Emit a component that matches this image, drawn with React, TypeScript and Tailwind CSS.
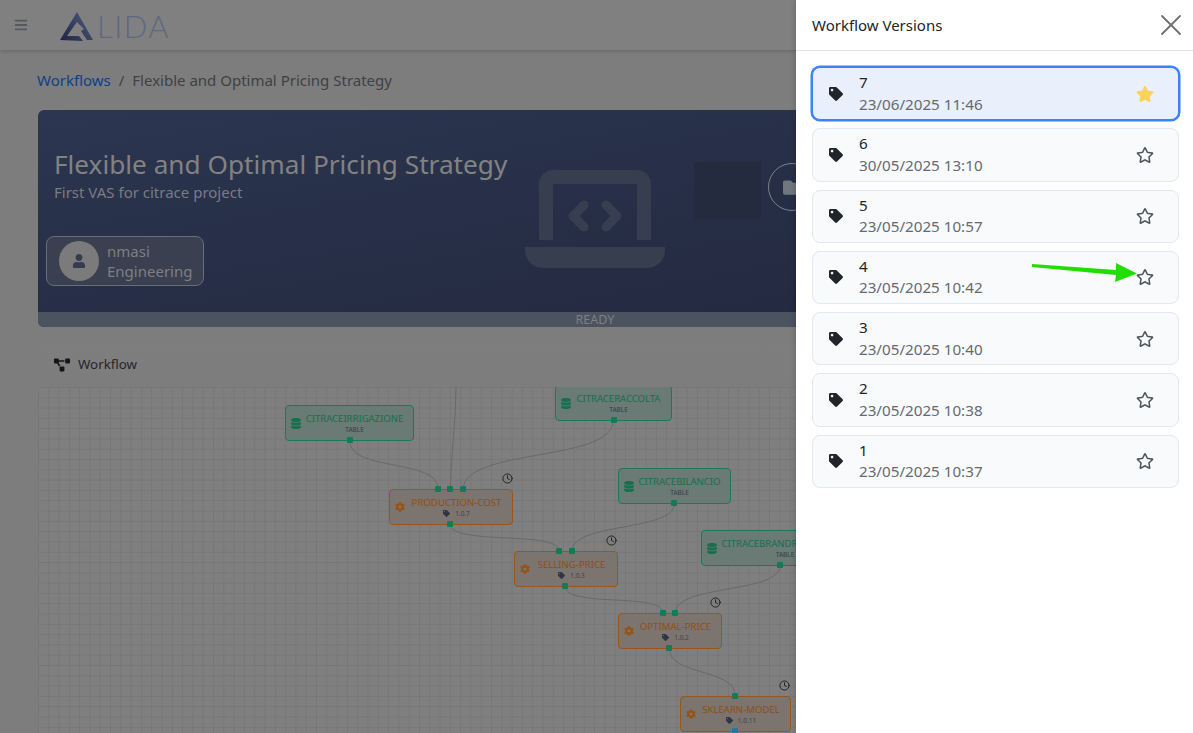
import { FaBars, FaTag, FaStar, FaRegStar, FaUser, FaFolder, FaDatabase, FaCog, FaProjectDiagram } from "react-icons/fa";
import { Clock, X } from "lucide-react";

const versions = [
  { n: "7", d: "23/06/2025 11:46", active: true },
  { n: "6", d: "30/05/2025 13:10" },
  { n: "5", d: "23/05/2025 10:57" },
  { n: "4", d: "23/05/2025 10:42" },
  { n: "3", d: "23/05/2025 10:40" },
  { n: "2", d: "23/05/2025 10:38" },
  { n: "1", d: "23/05/2025 10:37" },
];

const edges = [
  "M456 387 C456 420 451 455 450.3 489",
  "M349.7 441 C349.7 472 438.3 458 438.3 489",
  "M613 421 C613 462 463.3 448 463.3 489",
  "M450.3 524 C450.3 546 559.3 530 559.3 551",
  "M674.3 503.5 C674.3 532 572 522 572 551",
  "M565.3 586.5 C565.3 608 663.3 592 663.3 613",
  "M780 565.5 C780 594 675.3 584 675.3 613",
  "M669.3 648.5 C669.3 676 735.3 668 735.3 696",
];

function Port({ cls }: { cls: string }) {
  return <span className={`absolute h-[6px] w-[6px] rounded-[1px] bg-[#157a56] ${cls}`} />;
}

function Table({ cls, name, children }: { cls: string; name: string; children?: React.ReactNode }) {
  return (
    <div className={`absolute flex h-[36px] items-center rounded-[4px] border border-[#1a7a58] bg-[#6a7a74] pl-[5px] ${cls}`}>
      <FaDatabase className="h-[11px] w-[10px] shrink-0 text-[#14704e]" />
      <div className="flex flex-1 flex-col items-center pr-[5px]">
        <span className="whitespace-nowrap text-[9.5px] leading-[13px] text-[#14704e]">{name}</span>
        <span className="text-[6.5px] leading-[9px] text-[#343c48]">TABLE</span>
      </div>
      {children}
    </div>
  );
}

function Proc({ cls, name, version, children }: { cls: string; name: string; version: string; children?: React.ReactNode }) {
  return (
    <div className={`absolute flex h-[36px] items-center rounded-[4px] border border-[#9a5618] bg-[#7c746e] pl-[5px] ${cls}`}>
      <FaCog className="h-[10px] w-[10px] shrink-0 text-[#965316]" />
      <div className="flex flex-1 flex-col items-center pr-[4px]">
        <span className="whitespace-nowrap text-[9.6px] leading-[13px] text-[#8f4f16]">{name}</span>
        <span className="flex items-center gap-[5px] text-[6.5px] leading-[9px] text-[#3c434d]">
          <FaTag className="h-[7px] w-[7px] text-[#2e3646]" />
          {version}
        </span>
      </div>
      {children}
    </div>
  );
}

function Timer({ cls }: { cls: string }) {
  return <Clock className={`absolute h-[11px] w-[11px] text-[#1b1b1b] ${cls}`} strokeWidth={2} />;
}

export default function App() {
  return (
    <div className="relative h-screen w-full overflow-hidden bg-[#7d7d7d] font-['Noto_Sans',sans-serif] text-[15px]">
      <header className="flex h-[50px] items-center bg-[#808080] pl-[14px] shadow-[0_1px_4px_rgba(0,0,0,0.2)]">
        <FaBars className="h-[14px] w-[14px] text-[#55585c]" />
        <div className="ml-[32px] flex items-end">
          <svg width="34" height="30" viewBox="0 0 34 30" className="mt-[2px]">
            <defs>
              <linearGradient id="lg" x1="0" y1="1" x2="1" y2="0.2">
                <stop offset="0" stopColor="#1e2440" />
                <stop offset="1" stopColor="#4c587c" />
              </linearGradient>
            </defs>
            <path d="M17 1 L33 29 L27 29 L21 20 L24 18 L17 11 L7 25 L19 25 L23 30 L0 29 Z" fill="url(#lg)" />
          </svg>
          <span className="ml-[3px] font-['Lato',sans-serif] text-[31px] font-light leading-[30px] tracking-[1.5px] text-[#5f6880]">LIDA</span>
        </div>
      </header>

      <main className="px-[38px]">
        <nav className="flex h-[60px] items-center text-[#3e4145]">
          <span className="-ml-px text-[#0f3f88]">Workflows</span>
          <span className="mx-[8px]">/</span>
          <span>Flexible and Optimal Pricing Strategy</span>
        </nav>

        <section className="relative flex h-[217px] flex-col overflow-hidden rounded-[6px] bg-[linear-gradient(170deg,#2c3650,#21273e)]">
          <div className="flex flex-1 flex-col pt-[37px]">
            <h1 className="pl-[16px] text-[26.2px] leading-[34px] text-[#828282]">Flexible and Optimal Pricing Strategy</h1>
            <p className="mt-[1px] pl-[16px] text-[15px] leading-[20px] text-[#7b7c80]">First VAS for citrace project</p>
            <div className="ml-[8px] mt-[34px] flex h-[50px] w-[158px] items-center rounded-[8px] border border-[#686d79] bg-[#3a4050] pl-[12px]">
              <div className="flex h-[40px] w-[40px] items-center justify-center rounded-full bg-[#7b7b7b]">
                <FaUser className="h-[14px] w-[14px] text-[#343d50]" />
              </div>
              <div className="ml-[8px] text-[15px] leading-[20px] text-[#7d7f84]">
                <div>nmasi</div>
                <div>Engineering</div>
              </div>
            </div>
          </div>
          <div className="h-[15px] bg-[#4c5360] pr-[3px] text-center text-[12.5px] leading-[15px] text-[#7d7f84]">READY</div>

          <svg className="absolute left-[487px] top-[60px]" width="140" height="98" viewBox="0 0 140 98" fill="#363e50">
            <path fillRule="evenodd" d="M28 0 H112 A14 14 0 0 1 126 14 V70 H112 V14 H28 V70 H14 V14 A14 14 0 0 1 28 0 Z" />
            <path d="M0 77 H140 V80 A18 18 0 0 1 122 98 H18 A18 18 0 0 1 0 80 Z" />
            <path d="M59 35 L48 46 L59 57 M81 35 L92 46 L81 57" fill="none" stroke="#363e50" strokeWidth="9" strokeLinecap="round" strokeLinejoin="round" />
          </svg>
          <div className="absolute left-[656px] top-[52px] h-[57px] w-[67px] bg-[#252b3f]" />
          <div className="absolute left-[730px] top-[53px] flex h-[48px] w-[48px] items-center justify-center rounded-full border border-[#7c8088]">
            <FaFolder className="h-[19px] w-[19px] text-[#71767f]" />
          </div>
        </section>

        <section className="mt-[18px] bg-[linear-gradient(#7e7e7e,#72757a)]">
          <div className="flex h-[42px] items-center pb-[3px] pl-[16px] text-[13.3px] text-[#262626]">
            <FaProjectDiagram className="mr-[8px] h-[14px] w-[16px] text-[#141414]" />
            Workflow
          </div>
          <div className="relative h-[346px] overflow-hidden rounded-t-[4px] bg-[#7f7f7f] bg-[linear-gradient(#777777_1px,transparent_1px),linear-gradient(90deg,#777777_1px,transparent_1px)] bg-[size:10.3px_10.3px]">
            <svg className="absolute inset-0 h-full w-full" fill="none" stroke="#696969" strokeWidth="1">
              <g transform="translate(-38 -387)">
                {edges.map((d) => (
                  <path key={d} d={d} />
                ))}
              </g>
            </svg>

            <Table cls="left-[247px] top-[18px] w-[129px]" name="CITRACEIRRIGAZIONE">
              <Port cls="left-[61px] -bottom-[3px]" />
            </Table>
            <Table cls="left-[517px] -top-[2px] w-[117px]" name="CITRACERACCOLTA">
              <Port cls="left-[55px] -bottom-[3px]" />
            </Table>
            <Table cls="left-[580px] top-[81px] w-[113px]" name="CITRACEBILANCIO">
              <Port cls="left-[52px] -bottom-[3px]" />
            </Table>
            <Table cls="left-[663px] top-[143px] w-[158px]" name="CITRACEBRANDREPUTATION">
              <Port cls="left-[75px] -bottom-[3px]" />
            </Table>

            <Proc cls="left-[351px] top-[102px] w-[124px]" name="PRODUCTION-COST" version="1.0.7">
              <Port cls="left-[45px] -top-[4px]" />
              <Port cls="left-[57px] -top-[4px]" />
              <Port cls="left-[70px] -top-[4px]" />
              <Port cls="left-[57px] -bottom-[3px]" />
              <Timer cls="right-[-1px] -top-[17px]" />
            </Proc>
            <Proc cls="left-[476px] top-[164px] w-[104px]" name="SELLING-PRICE" version="1.0.3">
              <Port cls="left-[41px] -top-[4px]" />
              <Port cls="left-[54px] -top-[4px]" />
              <Port cls="left-[47px] -bottom-[3px]" />
              <Timer cls="left-[91px] -top-[17px]" />
            </Proc>
            <Proc cls="left-[580px] top-[226px] w-[104px]" name="OPTIMAL-PRICE" version="1.0.2">
              <Port cls="left-[41px] -top-[4px]" />
              <Port cls="left-[53px] -top-[4px]" />
              <Port cls="left-[47px] -bottom-[3px]" />
              <Timer cls="left-[91px] -top-[17px]" />
            </Proc>
            <Proc cls="left-[642px] top-[309px] w-[111px]" name="SKLEARN-MODEL" version="1.0.11">
              <Port cls="left-[51px] -top-[4px]" />
              <span className="absolute -bottom-[3px] left-[51px] h-[6px] w-[6px] rounded-[1px] bg-[#1f7aa3]" />
              <Timer cls="left-[98px] -top-[17px]" />
            </Proc>
          </div>
        </section>
      </main>

      <aside className="absolute right-0 top-0 flex h-full w-[397px] flex-col bg-white text-[#212529] shadow-[-2px_0_4px_rgba(0,0,0,0.12)]">
        <div className="flex h-[51px] items-center justify-between border-b border-[#dee2e6] pl-[16px] pr-[4px]">
          <span className="text-[15px]">Workflow Versions</span>
          <X className="h-[36px] w-[36px] text-[#707070]" strokeWidth={1.2} />
        </div>
        <ul className="flex flex-col gap-[8px] pb-[16px] pl-[16px] pr-[14px] pt-[16px]">
          {versions.map((v) => (
            <li
              key={v.n}
              className={
                v.active
                  ? "flex h-[53.25px] items-center rounded-[8px] border border-[#3b82f6] bg-[#e9effb] pl-[16px] pr-[24px] shadow-[0_0_0_1.5px_#3b82f6]"
                  : "flex h-[53.25px] items-center rounded-[8px] border border-[#e2e8f0] bg-[#f8fafc] pl-[16px] pr-[24px]"
              }
            >
              <FaTag className="h-[14px] w-[14px] text-[#212529]" />
              <div className="ml-[16px] flex-1 text-[15.2px] leading-[21.5px]">
                <div>{v.n}</div>
                <div className="text-[#666a70]">{v.d}</div>
              </div>
              {v.active ? (
                <FaStar className="h-[18px] w-[18px] text-[#fbd25c]" />
              ) : (
                <FaRegStar className="h-[18px] w-[18px] text-[#50555b]" />
              )}
            </li>
          ))}
        </ul>
        <svg className="absolute left-[236px] top-[262px]" width="106" height="22" viewBox="0 0 106 22">
          <path d="M0 2 L84 8 L84 1 L105 11.5 L83 20 L84 13 L0 5 Z" fill="#22dd00" />
        </svg>
      </aside>
    </div>
  );
}
